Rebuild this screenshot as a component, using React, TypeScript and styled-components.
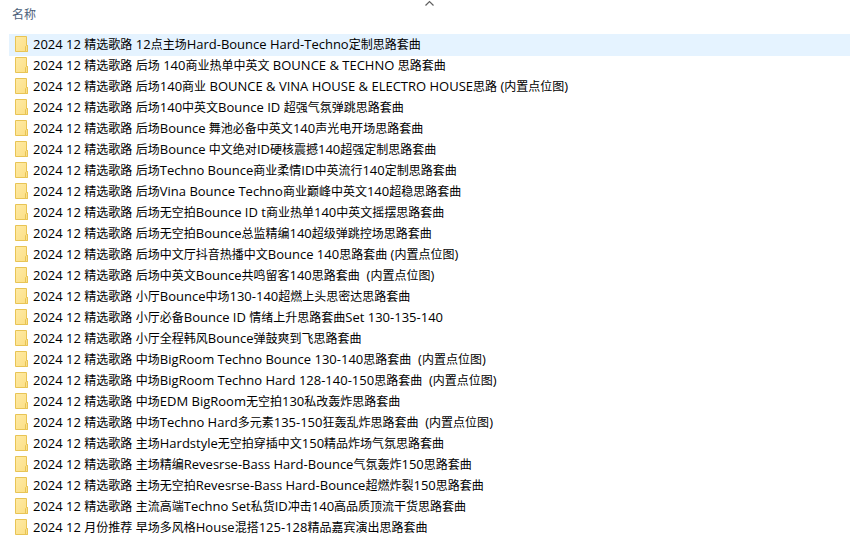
import React, { useState } from "react";
import styled, { createGlobalStyle } from "styled-components";

const GlobalStyle = createGlobalStyle`
  * { box-sizing: border-box; }
  body {
    margin: 0;
    background: #ffffff;
    color: #000000;
    font-family: "Noto Sans", "Noto Sans CJK SC", sans-serif;
    font-size: 12px;
  }
`;

const Pane = styled.main`
  padding-left: 9px;
  overflow: hidden;
`;

const ColumnHeader = styled.button`
  display: grid;
  grid-template-columns: 1fr auto 1fr;
  width: 100%;
  height: 34px;
  padding: 0 0 0 3px;
  border: 0;
  background: transparent;
  color: #4c607a;
  font: inherit;
  line-height: 30px;
  text-align: left;
`;

const SortArrow = styled.svg`
  display: block;
  width: 9px;
  height: 6px;
  margin-right: 3px;
`;

const FileList = styled.ul`
  margin: 0;
  padding: 0;
  list-style: none;
`;

const FileItem = styled.li`
  display: flex;
`;

const FileRow = styled.button<{ $active: boolean }>`
  display: flex;
  align-items: center;
  gap: 5px;
  width: 100%;
  height: 22px;
  margin-bottom: -1px;
  padding: 0 0 2px 6px;
  border: 0;
  background: ${({ $active }) => ($active ? "#e5f3ff" : "transparent")};
  color: inherit;
  font: inherit;
  line-height: 20px;
  text-align: left;
  white-space: pre;
`;

const Latin = styled.span`
  font-family: "Open Sans", "Noto Sans", sans-serif;
  font-size: 13px;
`;

const Folder = styled.svg`
  flex: none;
  width: 13px;
  height: 16px;
`;

const files = [
  "2024 12 精选歌路 12点主场Hard-Bounce Hard-Techno定制思路套曲",
  "2024 12 精选歌路 后场 140商业热单中英文 BOUNCE & TECHNO 思路套曲",
  "2024 12 精选歌路 后场140商业 BOUNCE & VINA HOUSE & ELECTRO HOUSE思路 (内置点位图)",
  "2024 12 精选歌路 后场140中英文Bounce ID 超强气氛弹跳思路套曲",
  "2024 12 精选歌路 后场Bounce 舞池必备中英文140声光电开场思路套曲",
  "2024 12 精选歌路 后场Bounce 中文绝对ID硬核震撼140超强定制思路套曲",
  "2024 12 精选歌路 后场Techno Bounce商业柔情ID中英流行140定制思路套曲",
  "2024 12 精选歌路 后场Vina Bounce Techno商业巅峰中英文140超稳思路套曲",
  "2024 12 精选歌路 后场无空拍Bounce ID t商业热单140中英文摇摆思路套曲",
  "2024 12 精选歌路 后场无空拍Bounce总监精编140超级弹跳控场思路套曲",
  "2024 12 精选歌路 后场中文厅抖音热播中文Bounce 140思路套曲 (内置点位图)",
  "2024 12 精选歌路 后场中英文Bounce共鸣留客140思路套曲  (内置点位图)",
  "2024 12 精选歌路 小厅Bounce中场130-140超燃上头思密达思路套曲",
  "2024 12 精选歌路 小厅必备Bounce ID 情绪上升思路套曲Set 130-135-140",
  "2024 12 精选歌路 小厅全程韩风Bounce弹鼓爽到飞思路套曲",
  "2024 12 精选歌路 中场BigRoom Techno Bounce 130-140思路套曲  (内置点位图)",
  "2024 12 精选歌路 中场BigRoom Techno Hard 128-140-150思路套曲  (内置点位图)",
  "2024 12 精选歌路 中场EDM BigRoom无空拍130私改轰炸思路套曲",
  "2024 12 精选歌路 中场Techno Hard多元素135-150狂轰乱炸思路套曲  (内置点位图)",
  "2024 12 精选歌路 主场Hardstyle无空拍穿插中文150精品炸场气氛思路套曲",
  "2024 12 精选歌路 主场精编Revesrse-Bass Hard-Bounce气氛轰炸150思路套曲",
  "2024 12 精选歌路 主场无空拍Revesrse-Bass Hard-Bounce超燃炸裂150思路套曲",
  "2024 12 精选歌路 主流高端Techno Set私货ID冲击140高品质顶流干货思路套曲",
  "2024 12 月份推荐 早场多风格House混搭125-128精品嘉宾演出思路套曲",
];

// Latin runs are set one step larger than the Chinese around them.
const FileName = ({ name }: { name: string }) => (
  <span>
    {name.split(/([\x20-\x7e]+)/).map((run, index) =>
      index % 2 === 1 ? <Latin key={index}>{run}</Latin> : run
    )}
  </span>
);

const FolderIcon = () => (
  <Folder viewBox="0 0 13 16" aria-hidden="true">
    <defs>
      <linearGradient id="folderFill" x1="0" y1="0" x2="1" y2="1">
        <stop offset="0" stopColor="#ffeaa4" />
        <stop offset="1" stopColor="#fbdf85" />
      </linearGradient>
    </defs>
    <path d="M.5 .5H11.5V9.5H12.5V15.5H.5Z" fill="url(#folderFill)" stroke="#e8c455" />
    <path d="M10.5 15.5V10.5L11.5 9.5H12.5V15.5Z" fill="#fbe08a" stroke="#e8c455" />
  </Folder>
);

export default function App() {
  const [active, setActive] = useState(0);
  const [ascending, setAscending] = useState(true);
  const shown = ascending ? files : [...files].reverse();

  return (
    <>
      <GlobalStyle />
      <Pane>
        <ColumnHeader type="button" onClick={() => setAscending(!ascending)}>
          <span>名称</span>
          <SortArrow viewBox="0 0 9 6" aria-hidden="true">
            <path
              d={ascending ? "M.5 5.5L4.5 1.5L8.5 5.5" : "M.5 1.5L4.5 5.5L8.5 1.5"}
              fill="none"
              stroke="#606060"
              strokeWidth="1.2"
            />
          </SortArrow>
        </ColumnHeader>
        <FileList>
          {shown.map((name, index) => (
            <FileItem key={name}>
              <FileRow type="button" $active={index === active} onClick={() => setActive(index)}>
                <FolderIcon />
                <FileName name={name} />
              </FileRow>
            </FileItem>
          ))}
        </FileList>
      </Pane>
    </>
  );
}
